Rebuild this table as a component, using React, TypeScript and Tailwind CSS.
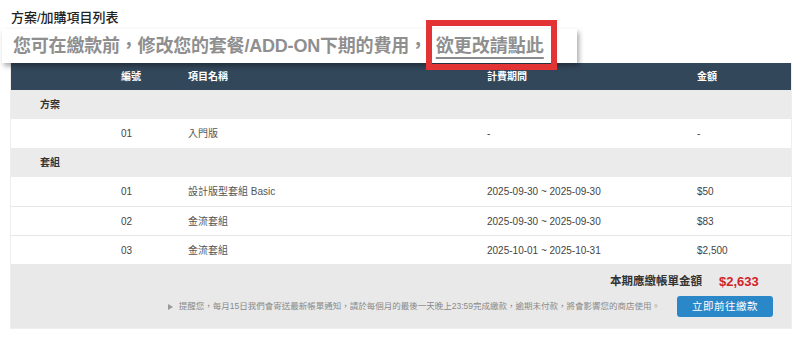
const font = "font-['Liberation_Sans','Noto_Sans_CJK_TC',sans-serif]"

interface Item {
  no: string
  name: string
  period: string
  amount: string
}

const groups: { title: string; items: Item[] }[] = [
  {
    title: '方案',
    items: [{ no: '01', name: '入門版', period: '-', amount: '-' }],
  },
  {
    title: '套組',
    items: [
      { no: '01', name: '設計版型套組 Basic', period: '2025-09-30 ~ 2025-09-30', amount: '$50' },
      { no: '02', name: '金流套組', period: '2025-09-30 ~ 2025-09-30', amount: '$83' },
      { no: '03', name: '金流套組', period: '2025-10-01 ~ 2025-10-31', amount: '$2,500' },
    ],
  },
]

const cols = 'grid grid-cols-[110px_67px_299px_210px_1fr] items-center'

export default function App() {
  return (
    <div className={`${font} w-[800px] h-[340px] bg-white overflow-hidden`}>
      <h1 className="pl-[11px] pt-[10px] h-[29px] text-[13px] leading-[16px] font-medium text-[#222]">
        方案/加購項目列表
      </h1>

      <div className="relative ml-[2px] w-[575px] h-[34px] bg-white shadow-[2px_3px_5px_rgba(0,0,0,0.35)] flex items-center pl-[11px] z-10">
        <p className="text-[18px] leading-[22px] font-bold text-[#8f8f8f] whitespace-nowrap">
          <span className="tracking-[-0.2px]">您可在繳款前，修改您的套餐/ADD-ON下期的費用，</span>
          <a href="#" className="ml-[9px] underline decoration-2 underline-offset-[5px] decoration-[#8a8a8a]">
            欲更改請點此
          </a>
        </p>
        <div className="absolute left-[424px] top-[-9px] w-[131px] h-[50px] border-[6px] border-[#e23434]" />
      </div>

      <div className="ml-[10px] w-[782px] border-x border-b border-[#eeeeee]">
        <div className={`${cols} h-[27px] bg-[#33475b] text-white text-[10px] font-bold`}>
          <span />
          <span>編號</span>
          <span>項目名稱</span>
          <span>計費期間</span>
          <span>金額</span>
        </div>

        {groups.map((group) => (
          <div key={group.title}>
            <div className="h-[29px] bg-[#ebebeb] flex items-center pl-[29px] text-[10px] font-bold text-[#333]">
              {group.title}
            </div>
            {group.items.map((item, i) => (
              <div
                key={item.no}
                className={`${cols} h-[29px] bg-white text-[10px] text-[#444] ${i > 0 ? 'border-t border-[#e6e6e6]' : ''}`}
              >
                <span />
                <span>{item.no}</span>
                <span className="text-[#555]">{item.name}</span>
                <span>{item.period}</span>
                <span>{item.amount}</span>
              </div>
            ))}
          </div>
        ))}

        <div className="h-[64px] bg-[#e9e9e9] flex flex-col items-end pt-[10px] pr-[18px]">
          <div className="flex items-center h-[16px]">
            <span className="text-[11.5px] font-bold text-[#333]">本期應繳帳單金額</span>
            <span className="w-[54px] ml-[17px] text-[13px] font-bold text-[#d1232a]">$2,633</span>
          </div>
          <div className="flex items-center mt-[6px]">
            <svg width="5" height="6" viewBox="0 0 5 6" className="mr-[6px]">
              <path d="M0 0 L5 3 L0 6 Z" fill="#999" />
            </svg>
            <span className="text-[8.5px] text-[#8a8a8a] whitespace-nowrap">
              提醒您，每月15日我們會寄送最新帳單通知，請於每個月的最後一天晚上23:59完成繳款，逾期未付款，將會影響您的商店使用。
            </span>
            <button
              type="button"
              className="ml-[17px] w-[96px] h-[21px] rounded-[3px] bg-[#2b88c8] text-white text-[10.5px] tracking-[0.5px]"
            >
              立即前往繳款
            </button>
          </div>
        </div>
      </div>
    </div>
  )
}
